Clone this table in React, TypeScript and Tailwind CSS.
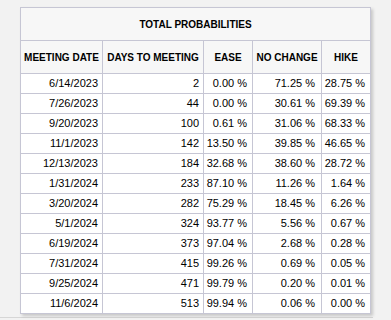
const rows: [string, number, string, string, string][] = [
  ['6/14/2023', 2, '0.00 %', '71.25 %', '28.75 %'],
  ['7/26/2023', 44, '0.00 %', '30.61 %', '69.39 %'],
  ['9/20/2023', 100, '0.61 %', '31.06 %', '68.33 %'],
  ['11/1/2023', 142, '13.50 %', '39.85 %', '46.65 %'],
  ['12/13/2023', 184, '32.68 %', '38.60 %', '28.72 %'],
  ['1/31/2024', 233, '87.10 %', '11.26 %', '1.64 %'],
  ['3/20/2024', 282, '75.29 %', '18.45 %', '6.26 %'],
  ['5/1/2024', 324, '93.77 %', '5.56 %', '0.67 %'],
  ['6/19/2024', 373, '97.04 %', '2.68 %', '0.28 %'],
  ['7/31/2024', 415, '99.26 %', '0.69 %', '0.05 %'],
  ['9/25/2024', 471, '99.79 %', '0.20 %', '0.01 %'],
  ['11/6/2024', 513, '99.94 %', '0.06 %', '0.00 %'],
]

const headers = ['MEETING DATE', 'DAYS TO MEETING', 'EASE', 'NO CHANGE', 'HIKE']

export default function App() {
  return (
    <div className="min-h-screen bg-[#f2f2f2] font-['Liberation_Sans',Arial,sans-serif] text-black">
      <div className="w-[373px] border-b border-[#d6d6d6] pt-[7px] pl-[20px] pb-[3px]">
        <table className="w-[350px] table-fixed border-collapse border border-[#c6c6d4] bg-white shadow-[2px_2px_3px_rgba(0,0,0,0.18)]">
          <colgroup>
            <col className="w-[82px]" />
            <col className="w-[101px]" />
            <col className="w-[49px]" />
            <col className="w-[69px]" />
            <col className="w-[49px]" />
          </colgroup>
          <thead>
            <tr className="bg-[#f7f7f7]">
              <th colSpan={5} className="h-[33px] border border-[#c6c6d4] p-0 text-center text-[10px] font-bold">
                TOTAL PROBABILITIES
              </th>
            </tr>
            <tr className="bg-[#f7f7f7]">
              {headers.map((h) => (
                <th key={h} className="h-[33px] border border-[#c6c6d4] p-0 text-center text-[10px] font-bold whitespace-nowrap">
                  {h}
                </th>
              ))}
            </tr>
          </thead>
          <tbody>
            {rows.map((r) => (
              <tr key={r[0]} className="text-[11px]">
                <td className="h-[20px] border border-[#c6c6d4] py-0 pr-[4px] text-right">{r[0]}</td>
                <td className="h-[20px] border border-[#c6c6d4] py-0 pr-[4px] text-right">{r[1]}</td>
                <td className="h-[20px] border border-[#c6c6d4] py-0 pr-[5px] text-right">{r[2]}</td>
                <td className="h-[20px] border border-[#c6c6d4] py-0 pr-[6px] text-right">{r[3]}</td>
                <td className="h-[20px] border border-[#c6c6d4] py-0 pr-[5px] text-right">{r[4]}</td>
              </tr>
            ))}
          </tbody>
        </table>
      </div>
    </div>
  )
}
